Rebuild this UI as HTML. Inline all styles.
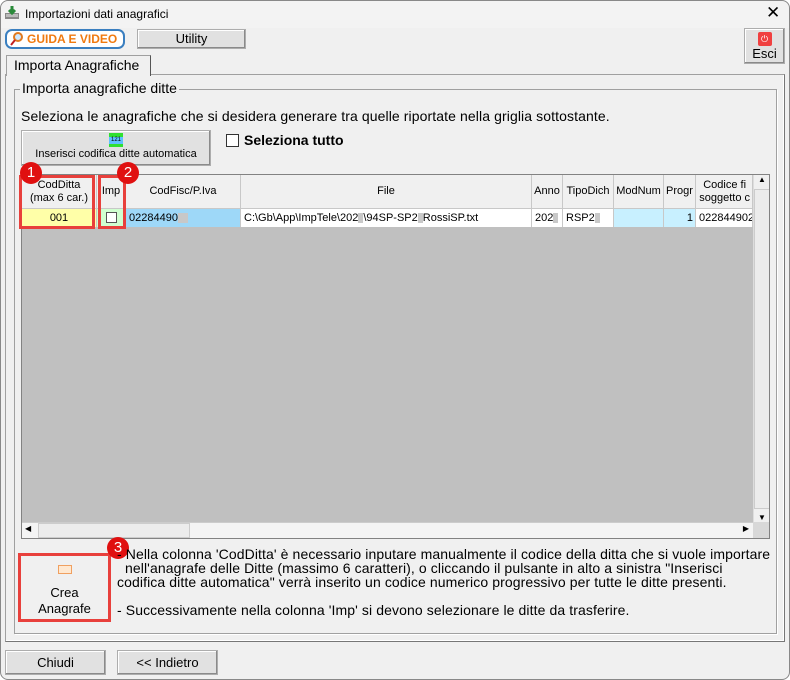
<!DOCTYPE html><html><head><meta charset="utf-8"><style>
*{box-sizing:border-box}body{margin:0;width:790px;height:680px;background:#fff;font-family:"Liberation Sans",sans-serif;font-size:12px;color:#000;position:relative;overflow:hidden}
.a{position:absolute}
.win{left:0;top:0;width:790px;height:680px;background:#f0f0f0;border:1px solid #888;border-radius:8px}
.btn{position:absolute;background:#e1e1e1;border:1px solid #adadad;text-align:center;box-shadow:inset -1px -1px 0 #8a8a8a,inset 1px 1px 0 #fff}
.hd{position:absolute;top:0;height:33px;border-right:1px solid #c8c8c8;background:#f0f0f0;text-align:center;font-size:11px;line-height:13px;display:flex;align-items:center;justify-content:center}
.cell{position:absolute;top:34px;height:18px;border-right:1px solid #c8c8c8;font-size:11px;line-height:18px;padding-left:3px;white-space:nowrap;overflow:hidden}
.red{position:absolute;border:3px solid #e8403c}
.circ{position:absolute;width:22px;height:22px;border-radius:50%;background:#e01010;color:#fff;font-size:15px;line-height:22px;text-align:center}
.blur{display:inline-block;width:10px;height:10px;background:#c8c8c8;vertical-align:middle}
</style></head><body>
<div class="a win"></div>
<div class="a" style="left:1px;top:1px;width:788px;height:27px;background:#f3f3f3;border-radius:8px 8px 0 0"></div>
<svg class="a" style="left:4px;top:5px" width="17" height="16"><rect x="1" y="8" width="14" height="6" fill="#888"/><rect x="2" y="9" width="12" height="3" fill="#bbb"/><path d="M8 1v7M5 5l3 3 3-3" stroke="#2a8a3a" stroke-width="3" fill="none"/></svg>
<div class="a" style="left:25px;top:7px;font-size:12px">Importazioni dati anagrafici</div>
<div class="a" style="left:766px;top:3px;font-size:17px">✕</div>
<div class="a" style="left:5px;top:29px;width:120px;height:20px;border:2px solid #3a7fc0;border-radius:7px;background:#fff;color:#f07a10;font-weight:bold;font-size:12px;line-height:16px;padding-left:20px">GUIDA E VIDEO</div>
<svg class="a" style="left:10px;top:31px" width="14" height="16"><circle cx="8" cy="6" r="4" stroke="#e07a20" stroke-width="2" fill="#cfe8ff"/><path d="M5 9l-4 5" stroke="#c02020" stroke-width="2"/></svg>
<div class="btn" style="left:137px;top:29px;width:109px;height:20px;line-height:18px;font-size:13px">Utility</div>
<div class="btn" style="left:744px;top:28px;width:41px;height:36px;font-size:13px"><div style="width:14px;height:14px;margin:3px auto 0;background:#f04040;border-radius:2px;color:#fff;font-size:9px;line-height:14px">⏻</div>Esci</div>
<div class="a" style="left:5px;top:74px;width:780px;height:568px;border:1px solid #a0a0a0;border-right-color:#777;border-bottom-color:#777;box-shadow:inset -1px -1px 0 #fff"></div>
<div class="a" style="left:6px;top:55px;width:145px;height:21px;background:#f0f0f0;border:1px solid #a0a0a0;border-bottom:none;border-right-color:#555;font-size:14px;line-height:19px;padding-left:7px">Importa Anagrafiche</div>
<div class="a" style="left:14px;top:89px;width:763px;height:545px;border:1px solid #a0a0a0;box-shadow:1px 1px 0 #fff"></div>
<div class="a" style="left:20px;top:80px;background:#f0f0f0;padding:0 2px;font-size:14px">Importa anagrafiche ditte</div>
<div class="a" style="left:21px;top:108px;font-size:14px;letter-spacing:0.1px">Seleziona le anagrafiche che si desidera generare tra quelle riportate nella griglia sottostante.</div>
<div class="btn" style="left:21px;top:130px;width:190px;height:36px;font-size:11px"><div style="width:14px;height:14px;margin:2px auto 1px;background:#5fc0ff;border-top:4px solid #30e030;border-bottom:3px solid #30e030;font-size:6px;line-height:6px">121</div>Inserisci codifica ditte automatica</div>
<div class="a" style="left:226px;top:134px;width:13px;height:13px;border:1px solid #333;background:#fff"></div>
<div class="a" style="left:244px;top:132px;font-weight:bold;font-size:14px">Seleziona tutto</div>
<div class="a" style="left:21px;top:174px;width:749px;height:365px;border:1px solid #828282;background:#c0c0c0;overflow:hidden">
<div class="a" style="left:0;top:0;width:731px;height:52px;background:#fff"></div>
<div class="hd" style="left:0;width:75px">CodDitta<br>(max 6 car.)</div>
<div class="hd" style="left:75px;width:29px">Imp</div>
<div class="hd" style="left:104px;width:115px">CodFisc/P.Iva</div>
<div class="hd" style="left:219px;width:291px">File</div>
<div class="hd" style="left:510px;width:31px">Anno</div>
<div class="hd" style="left:541px;width:51px">TipoDich</div>
<div class="hd" style="left:592px;width:50px">ModNum</div>
<div class="hd" style="left:642px;width:32px">Progr</div>
<div class="hd" style="left:674px;width:57px;justify-content:flex-end;padding-right:2px">Codice fi<br>soggetto c</div>
<div class="a" style="left:0;top:33px;width:731px;height:1px;background:#c8c8c8"></div>
<div class="cell" style="left:0;width:75px;background:#ffffa8;text-align:center;padding:0">001</div>
<div class="cell" style="left:75px;width:29px;background:#d0ffd0"><div style="width:11px;height:11px;border:1px solid #555;background:#fff;margin:3px 0 0 6px"></div></div>
<div class="cell" style="left:104px;width:115px;background:#9ed8f8">02284490<span class="blur"></span></div>
<div class="cell" style="left:219px;width:291px">C:\Gb\App\ImpTele\202<span class="blur" style="width:5px"></span>\94SP-SP2<span class="blur" style="width:5px"></span>RossiSP.txt</div>
<div class="cell" style="left:510px;width:31px">202<span class="blur" style="width:5px"></span></div>
<div class="cell" style="left:541px;width:51px">RSP2<span class="blur" style="width:5px"></span></div>
<div class="cell" style="left:592px;width:50px;background:#c8f0ff"></div>
<div class="cell" style="left:642px;width:32px;background:#c8f0ff;text-align:right;padding-right:2px">1</div>
<div class="cell" style="left:674px;width:57px">022844902</div>
<div class="a" style="left:731px;top:0;width:17px;height:347px;background:#f0f0f0;border-left:1px solid #ddd"><div style="font-size:8px;text-align:center">▲</div><div class="a" style="top:14px;left:0;width:16px;height:320px;background:#ececec;border:1px solid #ccc"></div><div class="a" style="bottom:0;left:0;width:16px;font-size:8px;text-align:center;background:#f0f0f0">▼</div></div>
<div class="a" style="left:0;top:347px;width:731px;height:16px;background:#f4f4f4;border-top:1px solid #ccc"><div class="a" style="left:3px;top:1px;font-size:8px">◀</div><div class="a" style="left:16px;top:0;width:152px;height:15px;background:#ececec;border:1px solid #ccc"></div><div class="a" style="right:4px;top:1px;font-size:8px">▶</div></div>
<div class="a" style="left:731px;top:347px;width:17px;height:17px;background:#d8d8d8"></div>
</div>
<div class="red" style="left:19px;top:175px;width:76px;height:54px"></div>
<div class="red" style="left:98px;top:175px;width:28px;height:54px"></div>
<div class="circ" style="left:20px;top:162px">1</div>
<div class="circ" style="left:117px;top:162px">2</div>
<div class="red" style="left:18px;top:553px;width:93px;height:69px"></div>
<div class="a" style="left:21px;top:556px;width:87px;height:63px;text-align:center;font-size:13px;line-height:16px"><div style="width:14px;height:9px;margin:9px auto 11px;border:1px solid #f0a060;background:#ffe8d0"></div>Crea<br>Anagrafe</div>
<div class="circ" style="left:107px;top:537px">3</div>
<div class="a" style="left:117px;top:547px;font-size:14px;line-height:14px;letter-spacing:0.1px;white-space:pre">- Nella colonna 'CodDitta' è necessario inputare manualmente il codice della ditta che si vuole importare
  nell'anagrafe delle Ditte (massimo 6 caratteri), o cliccando il pulsante in alto a sinistra "Inserisci
codifica ditte automatica" verrà inserito un codice numerico progressivo per tutte le ditte presenti.

- Successivamente nella colonna 'Imp' si devono selezionare le ditte da trasferire.</div>
<div class="btn" style="left:5px;top:650px;width:101px;height:25px;line-height:23px;font-size:13px">Chiudi</div>
<div class="btn" style="left:117px;top:650px;width:101px;height:25px;line-height:23px;font-size:13px">&lt;&lt; Indietro</div>
</body></html>
